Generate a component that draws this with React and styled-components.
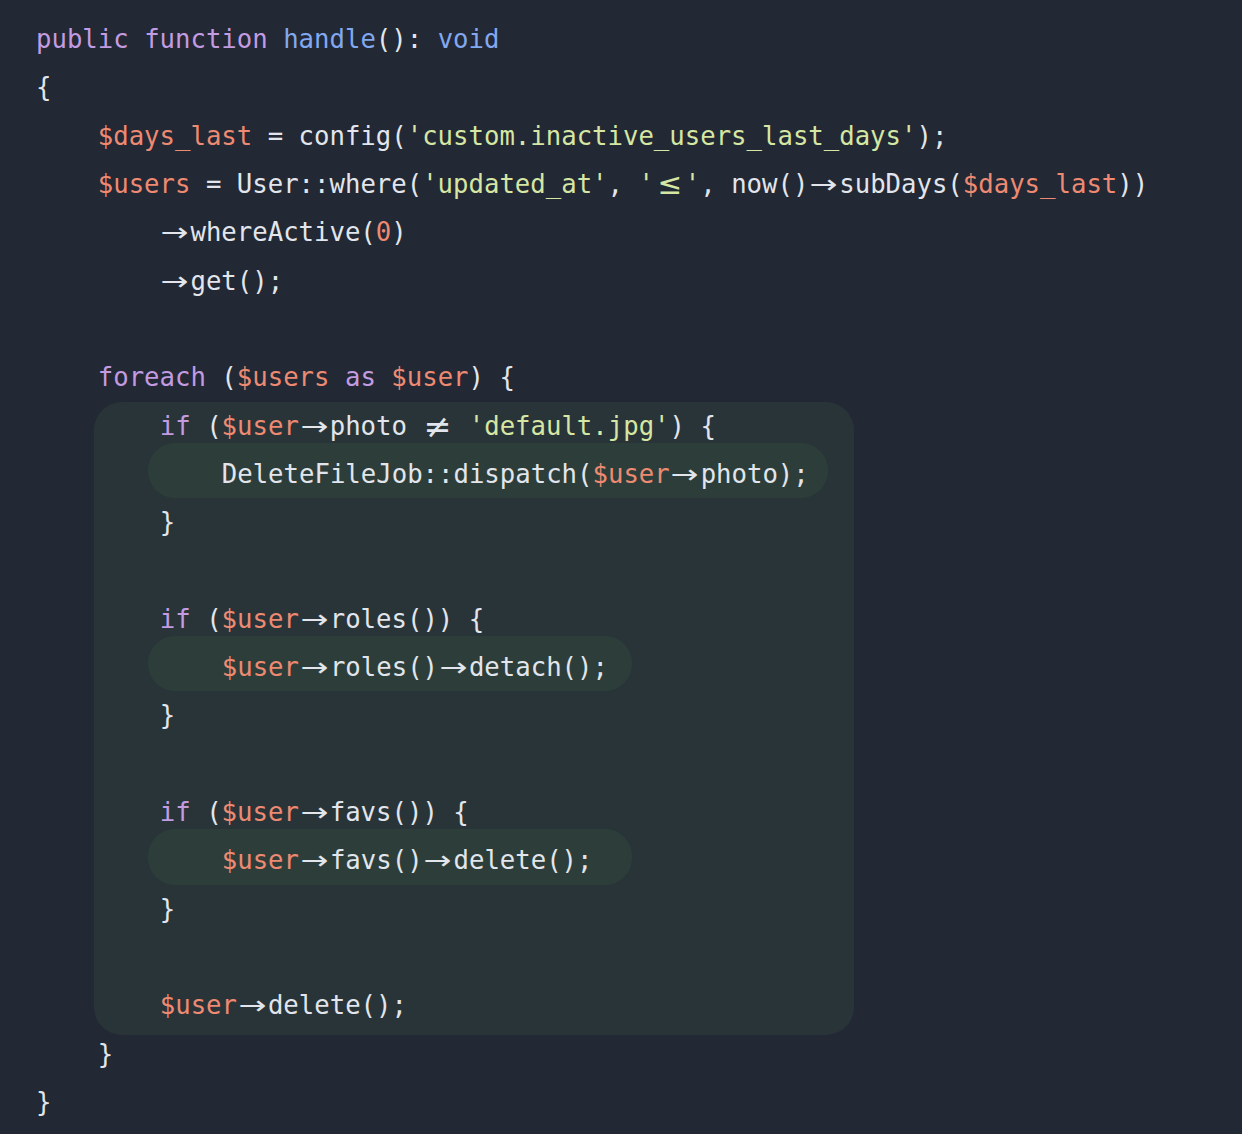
import React from "react";
import styled, { createGlobalStyle } from "styled-components";

const Global = createGlobalStyle`
  html, body { margin: 0; padding: 0; background: #222834; }
  body { min-height: 100vh; }
`;

const LINE = 48.32;

const Code = styled.div`
  font-family: "DejaVu Sans Mono", "Liberation Mono", monospace;
  font-size: 25.66px;
  color: #e2e6ec;
  background: #222834;
  padding: 15px 0 0 36px;
  min-height: 1134px;
  box-sizing: border-box;
`;

const Line = styled.div`
  height: ${LINE}px;
  line-height: ${LINE}px;
  white-space: pre;
  padding-left: ${(p) => (p.$level || 0) * 4}ch;
`;

const OuterBlock = styled.div`
  margin-left: 58px;
  width: 760px;
  box-sizing: border-box;
  padding: 0 0 5px 4px;
  margin-bottom: -5px;
  background: #293439;
  border-radius: 28px;
`;

const InnerBlock = styled.div`
  margin-left: 50px;
  margin-top: -7px;
  padding-top: 7px;
  padding-left: 12px;
  width: ${(p) => p.$width}px;
  box-sizing: border-box;
  background: #2d3e3a;
  border-radius: 27px;
`;

const Kw = styled.span`color: #c39be0;`;
const Fn = styled.span`color: #82a8f0;`;
const Var = styled.span`color: #ee8a72;`;
const Str = styled.span`color: #d6e6a3;`;
const Num = styled.span`color: #ee8a72;`;

const Lig = styled.span`
  display: inline-block;
  width: 2ch;
  text-align: center;
  overflow: visible;
`;

const LigGlyph = styled.span`
  display: inline-block;
  font-family: "DejaVu Sans", sans-serif;
  transform: scale(${(p) => p.$sx || 1}, ${(p) => p.$sy || 1});
`;

const Arrow = () => (
  <Lig>
    <LigGlyph $sx={1.3} $sy={1}>→</LigGlyph>
  </Lig>
);
const Neq = () => (
  <Lig>
    <LigGlyph $sx={1.3} $sy={1.3}>≠</LigGlyph>
  </Lig>
);
const Le = () => (
  <Lig>
    <LigGlyph $sx={1.15} $sy={1.15}>≤</LigGlyph>
  </Lig>
);

export default function App() {
  return (
    <>
      <Global />
      <Code>
        <Line>
          <Kw>public</Kw> <Kw>function</Kw> <Fn>handle</Fn>(): <Fn>void</Fn>
        </Line>
        <Line>{"{"}</Line>
        <Line $level={1}>
          <Var>$days_last</Var> = config(<Str>'custom.inactive_users_last_days'</Str>);
        </Line>
        <Line $level={1}>
          <Var>$users</Var> = User::where(<Str>'updated_at'</Str>, <Str>'<Le />'</Str>, now()
          <Arrow />subDays(<Var>$days_last</Var>))
        </Line>
        <Line $level={2}>
          <Arrow />whereActive(<Num>0</Num>)
        </Line>
        <Line $level={2}>
          <Arrow />get();
        </Line>
        <Line />
        <Line $level={1}>
          <Kw>foreach</Kw> (<Var>$users</Var> <Kw>as</Kw> <Var>$user</Var>) {"{"}
        </Line>
        <OuterBlock>
          <Line $level={1}>
            <Kw>if</Kw> (<Var>$user</Var>
            <Arrow />photo <Neq /> <Str>'default.jpg'</Str>) {"{"}
          </Line>
          <InnerBlock $width={680}>
            <Line $level={1}>
              DeleteFileJob::dispatch(<Var>$user</Var>
              <Arrow />photo);
            </Line>
          </InnerBlock>
          <Line $level={1}>{"}"}</Line>
          <Line />
          <Line $level={1}>
            <Kw>if</Kw> (<Var>$user</Var>
            <Arrow />roles()) {"{"}
          </Line>
          <InnerBlock $width={484}>
            <Line $level={1}>
              <Var>$user</Var>
              <Arrow />roles()
              <Arrow />detach();
            </Line>
          </InnerBlock>
          <Line $level={1}>{"}"}</Line>
          <Line />
          <Line $level={1}>
            <Kw>if</Kw> (<Var>$user</Var>
            <Arrow />favs()) {"{"}
          </Line>
          <InnerBlock $width={484}>
            <Line $level={1}>
              <Var>$user</Var>
              <Arrow />favs()
              <Arrow />delete();
            </Line>
          </InnerBlock>
          <Line $level={1}>{"}"}</Line>
          <Line />
          <Line $level={1}>
            <Var>$user</Var>
            <Arrow />delete();
          </Line>
        </OuterBlock>
        <Line $level={1}>{"}"}</Line>
        <Line>{"}"}</Line>
      </Code>
    </>
  );
}
